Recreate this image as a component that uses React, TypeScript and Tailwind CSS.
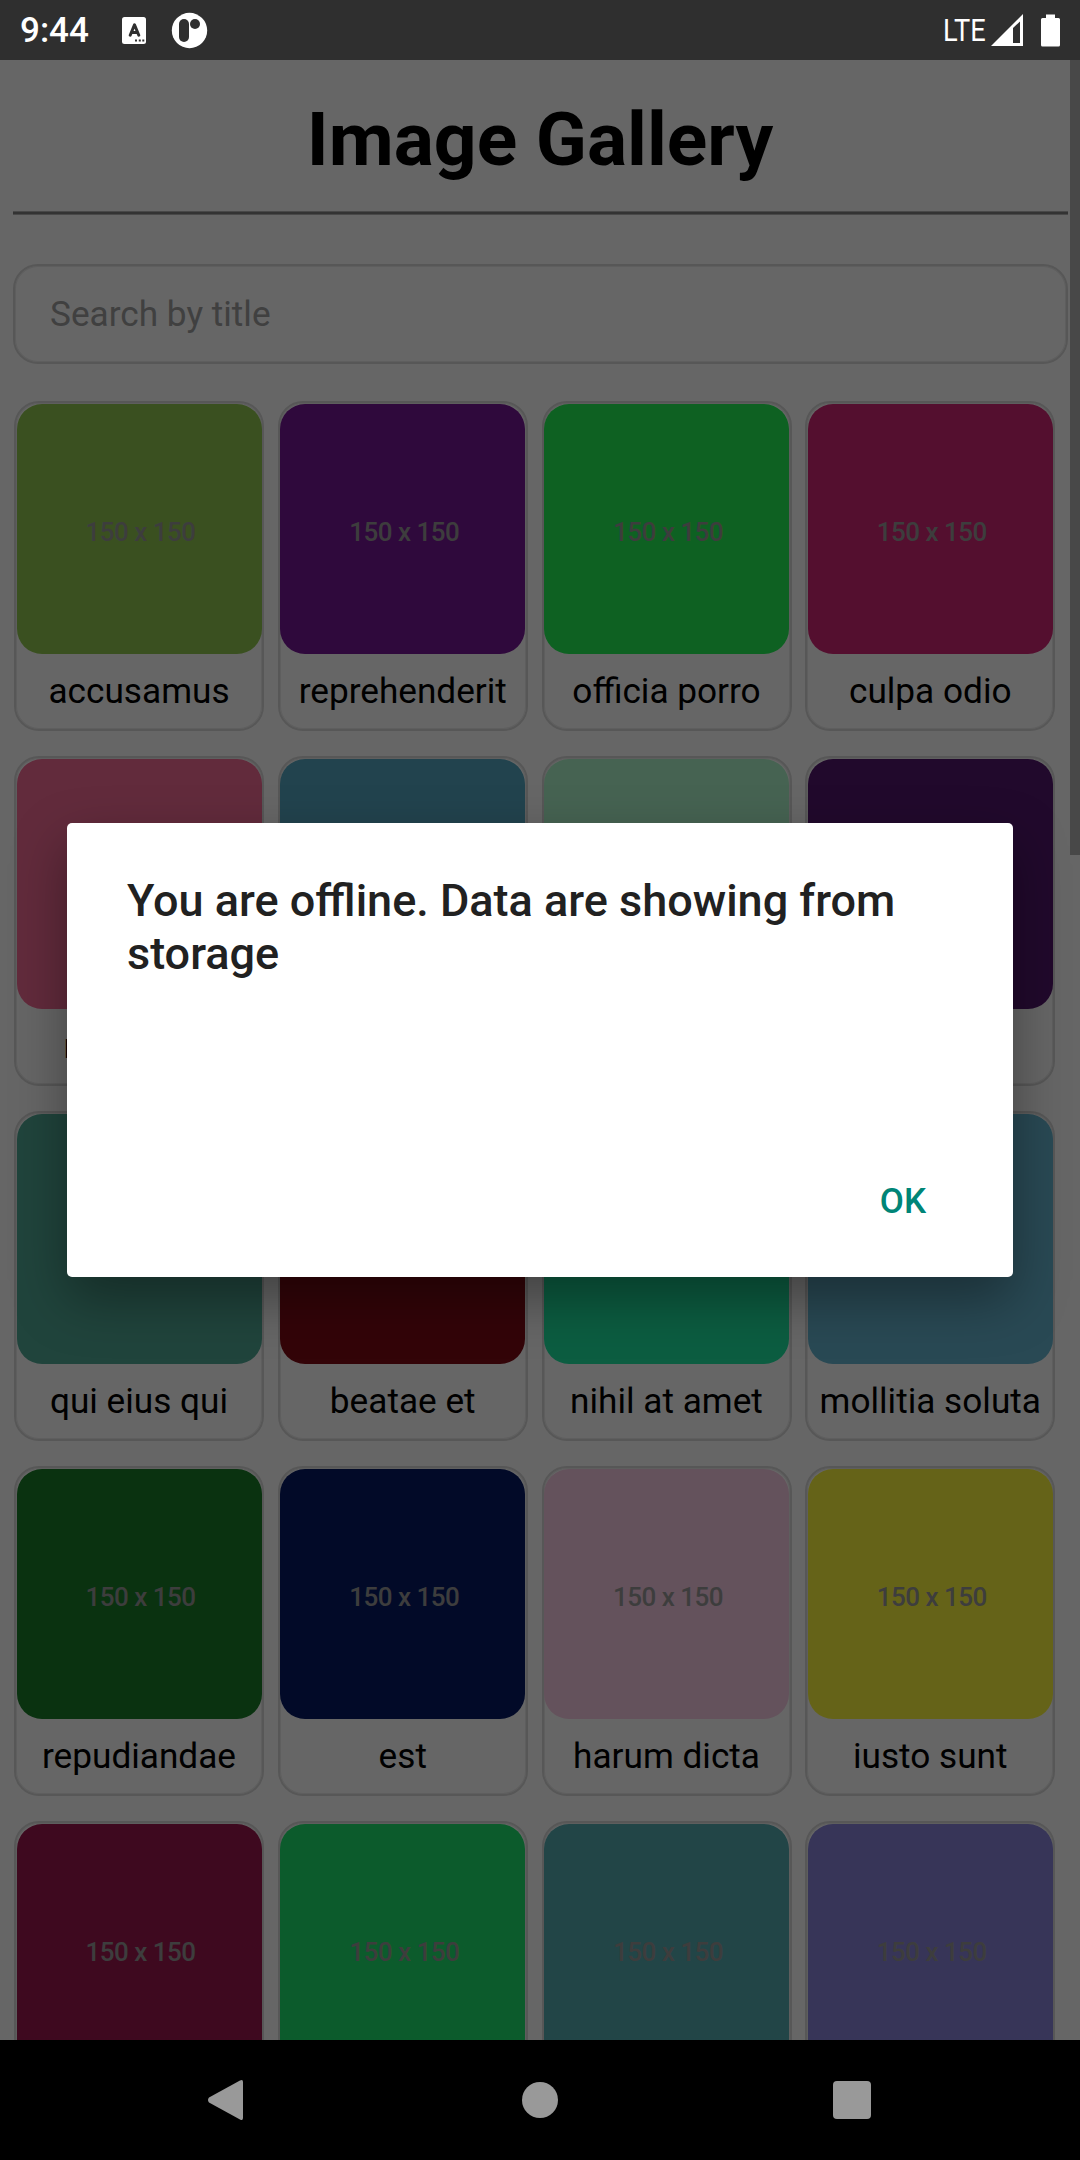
import React from "react";

type Photo = { title: string; color: string };

const photos: Photo[] = [
  { title: "accusamus", color: "bg-[#92c952]" },
  { title: "reprehenderit", color: "bg-[#771796]" },
  { title: "officia porro", color: "bg-[#24f355]" },
  { title: "culpa odio", color: "bg-[#d32776]" },
  { title: "natus nisi", color: "bg-[#f66b97]" },
  { title: "accusamus ea", color: "bg-[#56a8c2]" },
  { title: "officia", color: "bg-[#b0f7cc]" },
  { title: "aut porro", color: "bg-[#54176f]" },
  { title: "qui eius qui", color: "bg-[#51aa97]" },
  { title: "beatae et", color: "bg-[#810b14]" },
  { title: "nihil at amet", color: "bg-[#1ee8a4]" },
  { title: "mollitia soluta", color: "bg-[#66b7d2]" },
  { title: "repudiandae", color: "bg-[#197d29]" },
  { title: "est", color: "bg-[#061a65]" },
  { title: "harum dicta", color: "bg-[#f9cee5]" },
  { title: "iusto sunt", color: "bg-[#fdf73e]" },
  { title: "natus", color: "bg-[#9c184f]" },
  { title: "inventore", color: "bg-[#1fe46e]" },
  { title: "nobis", color: "bg-[#56acb2]" },
  { title: "ad et", color: "bg-[#8985dc]" },
];

function PhotoCard({ title, color }: Photo) {
  return (
    <div className="flex h-[330px] w-[250px] shrink-0 flex-col items-center rounded-[25px] border-2 border-[#d9d9d9] pt-px shadow-[inset_0_0_0_1px_#ececec]">
      <div className={`flex h-[250px] w-[245px] shrink-0 items-center justify-center rounded-[25px] ${color}`}>
        <span className="pt-[6px] pl-[3px] text-[26px] font-medium leading-none tracking-[-0.5px] text-[#9a9a9a]">150 x 150</span>
      </div>
      <span className="mt-[16px] whitespace-nowrap text-[35.200px] leading-[42px] text-black">{title}</span>
    </div>
  );
}

function StatusBar() {
  return (
    <header className="relative z-20 flex h-[60px] shrink-0 items-center justify-between bg-[#2f2f2f] text-white">
      <div className="flex items-center pl-[20px]">
        <span className="w-[102px] pt-px text-[35px] font-medium leading-[60px]">9:44</span>
        <svg className="mt-px" width="24" height="27" viewBox="0 0 24 27">
          <rect width="24" height="27" rx="2.5" fill="#fff" />
          <path d="M8.200 18.200 L12.500 7.800 L16.800 18.200 M9.500 15.500 H15.500" fill="none" stroke="#2f2f2f" strokeWidth="3" strokeLinecap="round" strokeLinejoin="round" />
          <path d="M13 22.5h2v2h-2zM16.800 22.5h2v2h-2zM20.300 22.500h2v2h-2z" fill="#2f2f2f" />
        </svg>
        <svg className="ml-[25px] mt-px" width="37" height="37" viewBox="0 0 37 37">
          <circle cx="18.500" cy="18.500" r="17.700" fill="#fff" />
          <rect x="8" y="7" width="10" height="23" rx="5" fill="#2f2f2f" />
          <circle cx="24" cy="12" r="5" fill="#2f2f2f" />
        </svg>
      </div>
      <div className="flex items-center pr-[20px]">
        <span className="w-[48px] origin-left scale-x-[0.85] text-[32px] leading-[58px]">LTE</span>
        <svg width="32" height="32" viewBox="0 0 32 32">
          <path fillRule="evenodd" d="M0 32 L32 0 V32Z M22 14 L29 7.500 V29 H22Z" fill="#fff" />
        </svg>
        <svg className="ml-[18px]" width="19" height="33" viewBox="0 0 19 33">
          <path d="M5 0.500h9v3.500h3.500a1.500 1.500 0 0 1 1.500 1.500v25.500a1.500 1.500 0 0 1-1.500 1.500h-16a1.500 1.500 0 0 1-1.500-1.500v-25.500a1.500 1.500 0 0 1 1.500-1.500h3.500z" fill="#fff" />
        </svg>
      </div>
    </header>
  );
}

function NavigationBar() {
  return (
    <nav className="relative z-20 flex h-[120px] shrink-0 items-center justify-between bg-black pl-[207px] pr-[209px]">
      <svg width="40" height="42" viewBox="0 0 40 42">
        <path d="M2 18.500 33 1.500Q36 0 36 3V39Q36 42 33 40.500L2 23.500Q0 21 2 18.500Z" fill="#999" />
      </svg>
      <div className="size-[36px] rounded-full bg-[#999999]" />
      <div className="size-[38px] rounded-[4px] bg-[#999999]" />
    </nav>
  );
}

function OfflineDialog() {
  return (
    <div className="absolute inset-0 z-10 flex flex-col items-center bg-black/60 pt-[763px]">
      <section className="flex h-[454px] w-[946px] flex-col justify-between rounded-[5px] bg-white shadow-[0_22px_54px_rgba(0,0,0,0.36)]">
        <h2 className="w-[830px] pl-[60px] pt-[51px] text-[45px] font-medium leading-[53px] text-[#212121]">
          You are offline. Data are showing from storage
        </h2>
        <button className="mr-[87px] mb-[54px] self-end text-[35px] font-medium leading-[42px] text-[#008577]">OK</button>
      </section>
    </div>
  );
}

export default function App() {
  return (
    <div className="flex h-[2160px] w-[1080px] flex-col overflow-hidden bg-white font-['Roboto',sans-serif]">
      <StatusBar />
      <div className="relative min-h-0 flex-1">
        <main className="flex h-full flex-col overflow-hidden px-[13px]">
          <h1 className="h-[151px] shrink-0 pt-[35px] text-center text-[75px] font-bold leading-[88px] text-black">Image Gallery</h1>
          <hr className="h-[4px] w-[1055px] shrink-0 border-y border-[#b4b4b4] bg-[#808080]" />
          <div className="mt-[49px] flex h-[100px] w-[1055px] shrink-0 items-center rounded-[25px] border-2 border-[#d9d9d9] pl-[35px] pt-px text-[35.200px] text-[#a0a0a0] shadow-[inset_0_0_0_1px_#ececec]">
            Search by title
          </div>
          <div className="mt-[37px] grid w-[1056px] grid-cols-4 gap-y-[25px] pl-px">
            {photos.map((photo, index) => (
              <PhotoCard key={index} {...photo} />
            ))}
          </div>
        </main>
        <div className="absolute right-0 top-0 h-[795px] w-[10px] bg-[#b4b4b4]" />
        <OfflineDialog />
      </div>
      <NavigationBar />
    </div>
  );
}
